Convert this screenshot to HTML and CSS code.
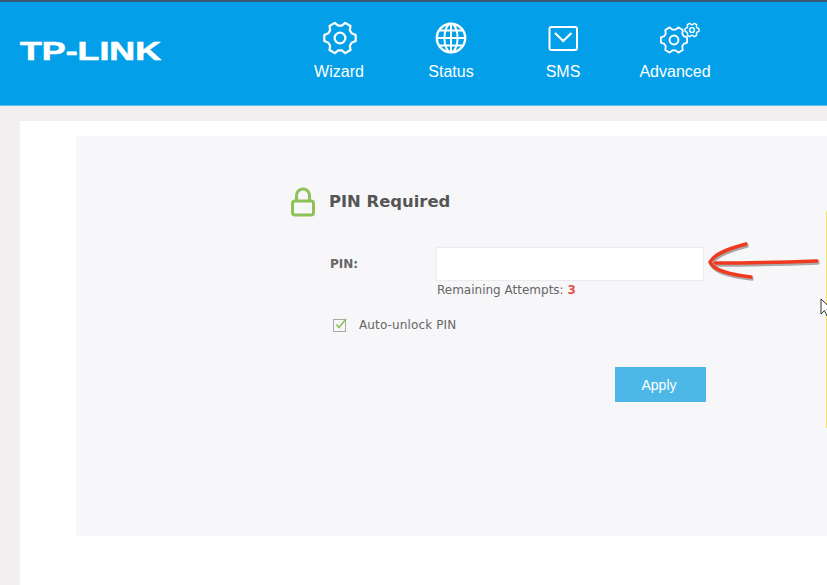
FILE: index.html
```html
<!DOCTYPE html>
<html lang="en">
<head>
    <meta charset="UTF-8">
    <meta name="viewport" content="width=device-width, initial-scale=1.0">
    <title>TP-LINK</title>
    <link rel="stylesheet" href="styles.css">
</head>
<body>
    <svg class="defs" width="0" height="0">
        <symbol id="gear" viewBox="-18 -18 36 36">
            <path d="M11.6 -4.7 L15.7 -3.05 L15.7 3.05 L11.6 4.7 L9.87 7.7 L10.49 12.07 L5.21 15.13 L1.73 12.4 L-1.73 12.4 L-5.21 15.13 L-10.49 12.07 L-9.87 7.7 L-11.6 4.7 L-15.7 3.05 L-15.7 -3.05 L-11.6 -4.7 L-9.87 -7.7 L-10.49 -12.07 L-5.21 -15.13 L-1.73 -12.4 L1.73 -12.4 L5.21 -15.13 L10.49 -12.07 L9.87 -7.7 Z" fill="none" stroke="#fff" stroke-width="2.2" stroke-linejoin="round"/>
            <circle r="5.4" fill="none" stroke="#fff" stroke-width="2.2"/>
        </symbol>
        <symbol id="gear-thick" viewBox="-18 -18 36 36">
            <path d="M11.6 -4.7 L15.7 -3.05 L15.7 3.05 L11.6 4.7 L9.87 7.7 L10.49 12.07 L5.21 15.13 L1.73 12.4 L-1.73 12.4 L-5.21 15.13 L-10.49 12.07 L-9.87 7.7 L-11.6 4.7 L-15.7 3.05 L-15.7 -3.05 L-11.6 -4.7 L-9.87 -7.7 L-10.49 -12.07 L-5.21 -15.13 L-1.73 -12.4 L1.73 -12.4 L5.21 -15.13 L10.49 -12.07 L9.87 -7.7 Z" fill="none" stroke="#fff" stroke-width="3.2" stroke-linejoin="round"/>
            <circle r="5.4" fill="none" stroke="#fff" stroke-width="3.2"/>
        </symbol>
    </svg>

    <header class="topbar">
        <div class="logo"><span>TP-LINK</span></div>
        <nav class="nav">
            <a class="nav-item" href="#">
                <svg class="nav-icon nav-icon-gear" width="36" height="36"><use href="#gear"/></svg>
                Wizard
            </a>
            <a class="nav-item" href="#">
                <svg class="nav-icon" width="36" height="36" viewBox="0 0 36 36" fill="none" stroke="#fff" stroke-width="2">
                    <circle cx="18" cy="18" r="14.2" stroke-width="2.4"/>
                    <ellipse cx="18" cy="18" rx="6.6" ry="14.2"/>
                    <path d="M18 4V32M4 18H32M6 10.5H30M6 25.5H30"/>
                </svg>
                Status
            </a>
            <a class="nav-item" href="#">
                <svg class="nav-icon" width="36" height="36" viewBox="0 0 36 36" fill="none" stroke="#fff" stroke-width="2">
                    <rect x="4.5" y="7" width="27.5" height="23" rx="2"/>
                    <path d="M10 13L18.2 21L26.5 13" stroke-width="2.2"/>
                </svg>
                SMS
            </a>
            <a class="nav-item" href="#">
                <span class="gear-pair">
                    <svg class="gear-big" width="30" height="30"><use href="#gear"/></svg>
                    <svg class="gear-small" width="16" height="16"><use href="#gear-thick"/></svg>
                </span>
                Advanced
            </a>
        </nav>
    </header>

    <main class="page">
        <div class="sheet">
            <section class="panel">
                <form class="pin-form">
                    <div class="title-row">
                        <svg width="26" height="30" viewBox="0 0 26 30" fill="none" stroke="#8fc15a" stroke-width="3">
                            <path d="M6.5 14V8.5a6.5 6.5 0 0 1 13 0V14"/>
                            <rect x="2.5" y="14" width="21" height="14" rx="2.5"/>
                        </svg>
                        <h2>PIN Required</h2>
                    </div>
                    <div class="pin-row">
                        <label for="pin">PIN:</label>
                        <div>
                            <input type="text" id="pin">
                            <p class="attempts">Remaining Attempts: <span>3</span></p>
                        </div>
                    </div>
                    <div class="auto-row">
                        <svg width="16" height="16" viewBox="0 0 16 16" fill="none">
                            <rect x="1.5" y="2.5" width="12" height="12" stroke="#a9a9a9"/>
                            <path d="M4.5 7.5L7 10.5L14 2" stroke="#8fc15a" stroke-width="1.6"/>
                        </svg>
                        <span>Auto-unlock PIN</span>
                    </div>
                    <div class="actions">
                        <button type="button">Apply</button>
                    </div>
                </form>
            </section>
        </div>
    </main>

    <!-- drawn over the screenshot -->
    <svg class="arrow" width="125" height="45" viewBox="0 0 125 45" fill="none" stroke-linecap="round">
        <g stroke="#6b6b6b" stroke-width="3.5" opacity="0.55" transform="translate(1 2)">
            <path d="M114 21C85 22 50 23 12 23"/>
            <path d="M43 4C28 8 12 13 7 22C10 30 28 35 48 37"/>
        </g>
        <g stroke="#f03a20" stroke-width="3.5">
            <path d="M114 21C85 22 50 23 12 23"/>
            <path d="M43 4C28 8 12 13 7 22C10 30 28 35 48 37"/>
        </g>
    </svg>
    <div class="edge-line"></div>
    <svg class="cursor" width="12" height="20" viewBox="0 0 12 20">
        <path d="M1 1V16L4.5 12.5L7 18L9.5 17L7 11.5H12Z" fill="#fff" stroke="#333"/>
    </svg>
</body>
</html>
```

FILE: styles.css
```css
html, body {
    height: 585px;
    overflow: hidden;
}

body {
    position: relative;
    margin: 0;
    background-color: #f1eff0;
    font-family: "Liberation Sans", Arial, sans-serif;
}

.defs {
    position: absolute;
}

.topbar {
    display: flex;
    box-sizing: border-box;
    height: 106px;
    border-top: 2px solid #3a5874;
    border-bottom: 1px solid #5cc1f1;
    background-color: #039fe8;
}

.logo {
    width: 283px;
    padding: 34px 0 0 20px;
    box-sizing: border-box;
    color: #fff;
    font-size: 25px;
    font-weight: bold;
    line-height: 30px;
}

.logo span {
    display: inline-block;
    transform: scaleX(1.43);
    transform-origin: left;
    -webkit-text-stroke: 0.6px #fff;
}

.nav {
    display: flex;
}

.nav-item {
    display: flex;
    flex-direction: column;
    align-items: center;
    width: 112px;
    padding-top: 18px;
    color: #fff;
    font-size: 16px;
    line-height: 20px;
    text-decoration: none;
}

.nav-icon {
    margin-bottom: 6px;
}

.nav-icon-gear {
    margin-left: 2px;
}

.gear-pair {
    position: relative;
    display: block;
    width: 40px;
    height: 36px;
    margin-bottom: 6px;
}

.gear-big {
    position: absolute;
    left: 4px;
    top: 5px;
}

.gear-small {
    position: absolute;
    right: -5px;
    top: 2px;
}

.sheet {
    height: 464px;
    margin: 15px 0 0 20px;
    padding: 15px 0 0 56px;
    box-sizing: border-box;
    background-color: #fff;
}

.panel {
    height: 400px;
    padding: 51px 0 0 215px;
    box-sizing: border-box;
    background-color: #f7f6f8;
}

.pin-form {
    width: 415px;
    color: #666;
    font-family: "DejaVu Sans", sans-serif;
    font-size: 12px;
}

.title-row {
    display: flex;
    align-items: center;
    gap: 13px;
    height: 30px;
}

.title-row svg {
    margin-left: -1px;
}

.title-row h2 {
    margin: 0 0 2px;
    color: #555;
    font-size: 16.4px;
    font-weight: bold;
}

.pin-row {
    display: flex;
    margin-top: 30px;
    padding-left: 39px;
}

.pin-row label {
    width: 106px;
    font-weight: bold;
    line-height: 34px;
}

.pin-row input {
    display: block;
    box-sizing: border-box;
    width: 268px;
    height: 34px;
    border: 1px solid #ebebeb;
    background-color: #fff;
}

.attempts {
    margin: 1px 0 0 1px;
    line-height: 16px;
}

.attempts span {
    color: #e8504a;
    font-weight: bold;
}

.auto-row {
    display: flex;
    align-items: center;
    gap: 11px;
    margin-top: 19px;
    padding-left: 41px;
    line-height: 16px;
    letter-spacing: 0.13px;
}

.actions {
    display: flex;
    justify-content: flex-end;
    margin-top: 34px;
}

button {
    width: 91px;
    height: 35px;
    padding: 0 3px 0 0;
    border: none;
    background-color: #4db8e8;
    color: #fff;
    font-family: "Liberation Sans", Arial, sans-serif;
    font-size: 14px;
}

.arrow {
    position: absolute;
    left: 703px;
    top: 240px;
}

.edge-line {
    position: absolute;
    left: 826px;
    top: 211px;
    width: 1px;
    height: 217px;
    background-color: #f2e36f;
}

.cursor {
    position: absolute;
    left: 820px;
    top: 298px;
}
```
